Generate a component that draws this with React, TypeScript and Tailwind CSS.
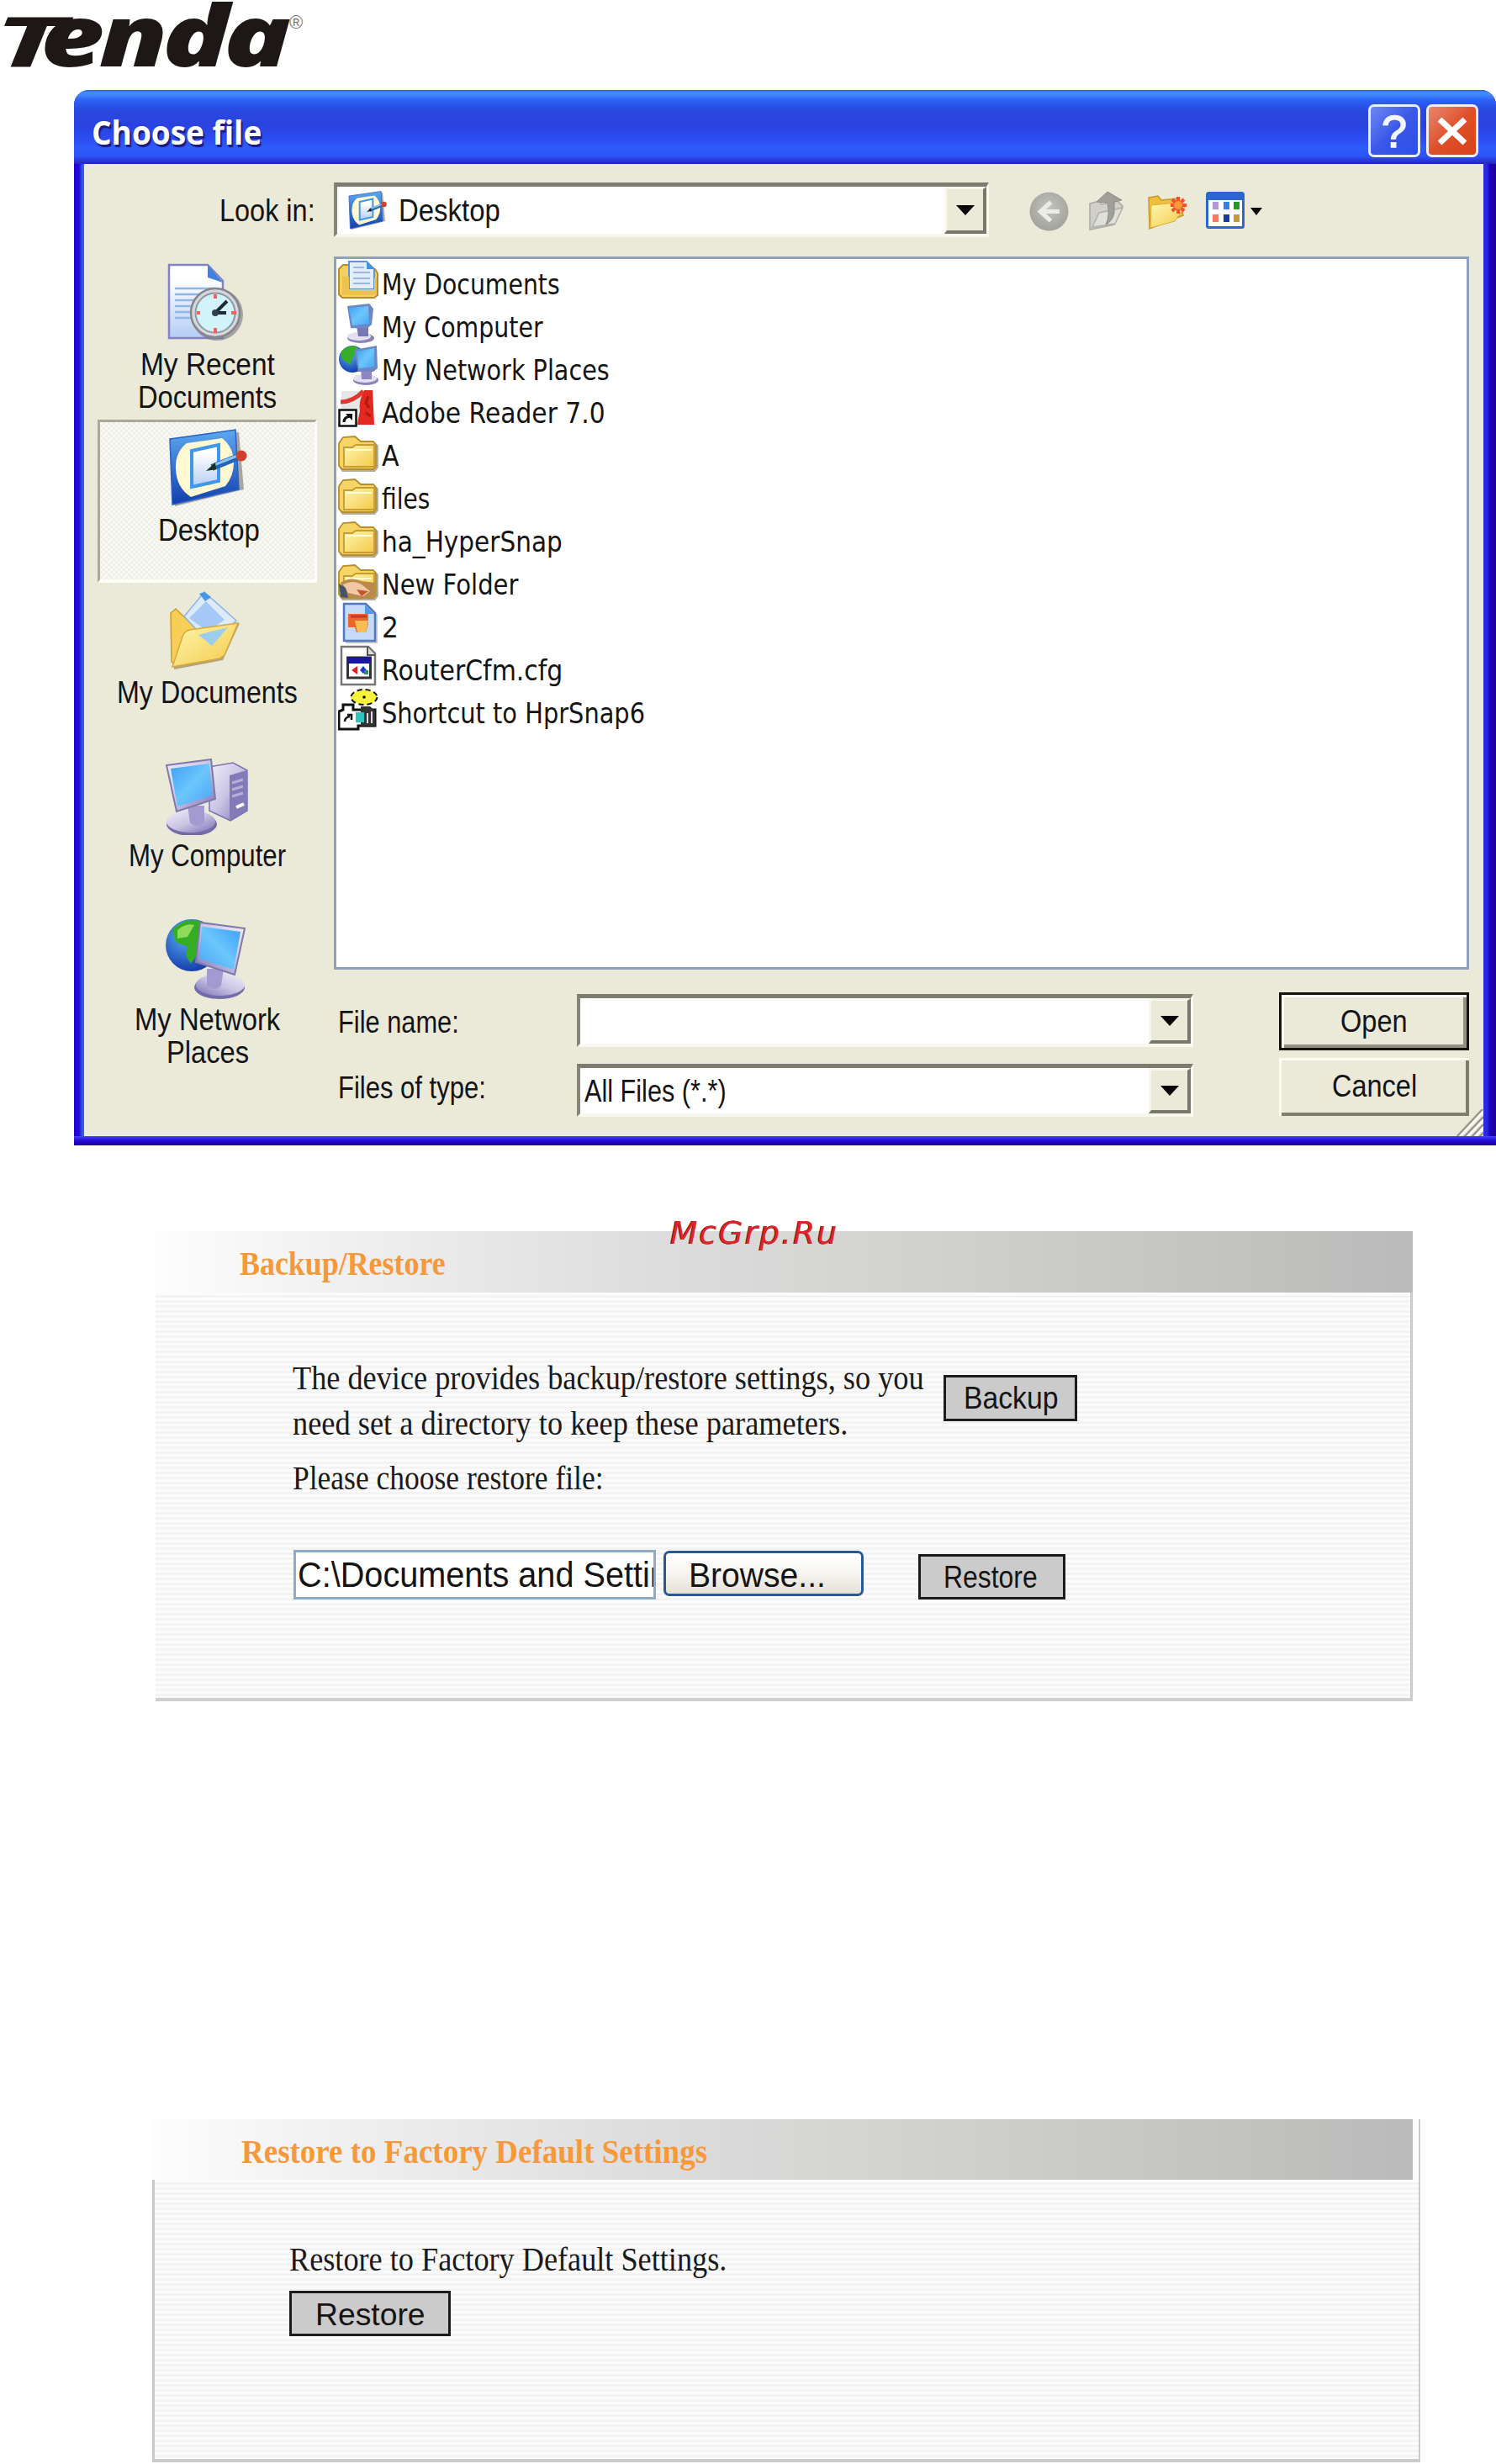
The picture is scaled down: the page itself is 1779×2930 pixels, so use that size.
import { useLayoutEffect, useRef, type ReactNode } from "react";

/* One line of text stretched to fill the width of its box. */
function Fit({ children, className = "" }: { children: ReactNode; className?: string }) {
  const ref = useRef<HTMLSpanElement>(null);
  useLayoutEffect(() => {
    const el = ref.current;
    if (!el || !el.parentElement) return;
    const fit = () => {
      el.style.transform = `scaleX(${el.parentElement!.clientWidth / el.offsetWidth})`;
    };
    fit();
    document.fonts?.ready.then(fit);
  }, []);
  return (
    <span className={`block shrink-0 whitespace-pre ${className}`}>
      <span ref={ref} className="inline-block origin-left align-top">
        {children}
      </span>
    </span>
  );
}

const MS = "font-['Liberation_Sans'] text-[37px] leading-[39px] text-[#141414]";
const TAHOMA = "font-['DejaVu_Sans'] text-[33px] leading-[51px] text-[#141414]";
const SERIF = "font-['Liberation_Serif'] text-[40px] leading-[54px] text-[#1a1a1a]";

function Defs() {
  return (
    <svg className="absolute h-0 w-0">
      <defs>
        <linearGradient id="screen" x1="0" y1="0" x2="1" y2="1">
          <stop offset="0" stopColor="#3ba0f8" />
          <stop offset=".5" stopColor="#6cc6fb" />
          <stop offset="1" stopColor="#4aa4f4" />
        </linearGradient>
        <linearGradient id="lilac" x1="0" y1="0" x2="1" y2="1">
          <stop offset="0" stopColor="#f1eef9" />
          <stop offset=".5" stopColor="#c9c3e4" />
          <stop offset="1" stopColor="#7870b4" />
        </linearGradient>
        <linearGradient id="yellow" x1="0" y1="0" x2="1" y2="1">
          <stop offset="0" stopColor="#fff6b0" />
          <stop offset="1" stopColor="#f3ca48" />
        </linearGradient>
        <linearGradient id="frame" x1="0" y1="0" x2="0" y2="1">
          <stop offset="0" stopColor="#5ea8ee" />
          <stop offset="1" stopColor="#123fae" />
        </linearGradient>
        <linearGradient id="paper" x1="0" y1="0" x2="0" y2="1">
          <stop offset=".2" stopColor="#ffffff" />
          <stop offset="1" stopColor="#b4cdf5" />
        </linearGradient>
        <radialGradient id="globe" cx=".4" cy=".3" r=".8">
          <stop offset="0" stopColor="#5cb0f4" />
          <stop offset="1" stopColor="#0b2fa4" />
        </radialGradient>
        <radialGradient id="grey" cx=".5" cy=".4" r=".6">
          <stop offset="0" stopColor="#c4c4be" />
          <stop offset="1" stopColor="#a2a29c" />
        </radialGradient>
      </defs>
    </svg>
  );
}

function RecentIcon() {
  return (
    <svg className="h-[94px] w-[92px]" viewBox="0 0 92 94">
      <path d="M2 3H48L66 22V90H2Z" fill="url(#paper)" stroke="#8583c8" strokeWidth="2.5" />
      <path d="M48 3 66 24 48 18Z" fill="#3f83dc" />
      <path d="M9 31H56M9 38H40M9 45H32M9 52H29M9 59H28M9 66H29" stroke="#8fb6ea" strokeWidth="2.5" />
      <circle cx="59" cy="62" r="31" fill="#7d7d88" opacity=".65" />
      <circle cx="57" cy="60" r="29" fill="#d8d8dc" stroke="#85858e" strokeWidth="2.5" />
      <circle cx="57" cy="60" r="23.500" fill="#d2f3fa" stroke="#8c9aa4" strokeWidth="2" />
      <path d="M57 38v5M57 78v6M35 60h4M76 60h6" stroke="#f2635c" strokeWidth="4" />
      <path d="M57 60 71 46M57 60H70" stroke="#1c2c38" strokeWidth="4" />
      <circle cx="57" cy="60" r="4" fill="#30404c" />
    </svg>
  );
}

function DesktopIcon({ className }: { className: string }) {
  return (
    <svg className={className} viewBox="0 0 94 92" preserveAspectRatio="none">
      <path d="M4 15 84 4 90 72 8 92Z" fill="#77706c" opacity=".6" />
      <path d="M2 12 80 1 84 72 5 90Z" fill="url(#frame)" stroke="#2563c4" strokeWidth="1.500" />
      <path d="M22 17 64 11Q78 22 78 40 78 56 68 68L27 81Q10 70 9 48 8 28 22 17Z" fill="#fff8d0" />
      <path d="M28 26 60 19V62L28 69Z" fill="url(#paper)" stroke="#3f97ea" strokeWidth="4" />
      <path d="M52 46 84 33" stroke="#2563b4" strokeWidth="8" />
      <path d="M54 43 82 32" stroke="#8cc6f8" strokeWidth="3" />
      <path d="M45 50 56 40 57 48Z" fill="#18301c" />
      <circle cx="87" cy="32" r="6.500" fill="#d0402c" />
    </svg>
  );
}

function DocumentsIcon() {
  return (
    <svg className="h-[93px] w-[88px]" viewBox="0 0 88 93">
      <path d="M7 28 40 50 84 38 64 82 6 93Z" fill="#8c7440" opacity=".6" />
      <path d="M2 26 8 21 34 46 8 88 3 84Z" fill="#f8cf56" stroke="#cf9a2c" strokeWidth="1.500" />
      <path d="M42 1 80 35 50 64 18 30Z" fill="#dceafb" stroke="#8cb4e8" strokeWidth="1.500" />
      <path d="M44 12 66 34 46 48 24 32Z" fill="#a5c8f6" />
      <path d="M36 3 42 1 50 7 43 12Z" fill="#4796ee" />
      <path d="M4 90 16 54Q18 48 24 46L82 38 66 76 60 80Z" fill="url(#yellow)" stroke="#d8a83c" strokeWidth="1.500" />
      <path d="M35 52 70 43 51 65Z" fill="#9cccee" />
    </svg>
  );
}

function Monitor({ x = 0, y = 0, flip = false }: { x?: number; y?: number; flip?: boolean }) {
  return (
    <g transform={flip ? `translate(${x + 60} ${y}) scale(-1 1)` : `translate(${x} ${y})`}>
      <ellipse cx="31" cy="78" rx="30" ry="14" fill="#746ca8" />
      <ellipse cx="30" cy="75" rx="29" ry="13" fill="url(#lilac)" />
      <path d="M26 56H46V76Q37 84 29 76Z" fill="#a39bcf" />
      <path d="M1 8 54 1 59 48 13 63Z" fill="url(#lilac)" stroke="#7e78ac" strokeWidth="2" />
      <path d="M6 12 52 6 55 44 14 57Z" fill="url(#screen)" />
    </g>
  );
}

function ComputerIcon() {
  return (
    <svg className="h-[91px] w-[98px]" viewBox="0 0 98 91">
      <path d="M52 10 80 5 97 14V62L77 74 52 62Z" fill="url(#lilac)" stroke="#7a73b0" strokeWidth="1.500" />
      <path d="M76 20 96 14V62L76 74Z" fill="#837bb8" />
      <path d="M79 29 92 25M79 37 92 33M79 45 92 41" stroke="#b5aeda" strokeWidth="3" />
      <path d="M84 58 93 54" stroke="#ffffff" strokeWidth="4" />
      <Monitor />
    </svg>
  );
}

function NetworkIcon() {
  return (
    <svg className="h-[97px] w-[98px]" viewBox="0 0 98 97">
      <circle cx="31" cy="32" r="31" fill="url(#globe)" />
      <path d="M8 14Q18 2 34 2 50 4 54 14L40 24 42 36 30 54 24 44 26 34 12 28Z" fill="#35ad22" />
      <path d="M14 14Q24 5 34 8L26 22 14 24Z" fill="#a5e66a" opacity=".8" />
      <Monitor x={35} y={4} flip />
    </svg>
  );
}

function FolderShape() {
  return (
    <g>
      <path d="M4 14 9 9H22L28 14H44L48 18V44L44 49H5L2 45Z" fill="#8d8263" opacity=".65" />
      <path d="M1 42V15L6 8 20 7 27 13H42L45 17V43L42 46H5Z" fill="#f5d565" stroke="#b98d2c" strokeWidth="1.800" />
      <path d="M7 43V20H17L21 17H43V43Z" fill="url(#yellow)" stroke="#c99b32" strokeWidth="1.800" />
      <path d="M10 23H40" stroke="#fffbd8" strokeWidth="2" />
    </g>
  );
}

function ShortcutBadge() {
  return (
    <g>
      <rect x="1.500" y="26.500" width="20" height="19" fill="#fff" stroke="#111" strokeWidth="2.500" />
      <path d="M7 41Q7 35 14 34" fill="none" stroke="#111" strokeWidth="3" />
      <path d="M9 31H17V39Z" fill="#111" />
    </g>
  );
}

function FileIcon({ kind }: { kind: string }) {
  return (
    <svg className="h-[51px] w-[48px] shrink-0" viewBox="0 0 48 51">
      {kind === "docs" && (
        <g>
          <path d="M1 42V12L6 7H16L20 12H44L47 17V43L43 46H5Z" fill="#f4d060" stroke="#b98d2c" strokeWidth="2" />
          <path d="M13 3H34L43 12V36H13Z" fill="#e2edfc" stroke="#5b93d8" strokeWidth="2" />
          <path d="M34 3V12H43Z" fill="#3e94e6" />
          <path d="M18 10H31M18 16H38M18 23H38M18 29H38" stroke="#9bb8e0" strokeWidth="2" />
          <path d="M5 21H13V37H43V22H46V43H5Z" fill="#eec24c" />
          <path d="M13 37H43" stroke="#b6c8e4" strokeWidth="2" />
        </g>
      )}
      {kind === "computer" && (
        <g>
          <ellipse cx="27" cy="43" rx="16" ry="6" fill="#8b84b8" />
          <ellipse cx="25" cy="41" rx="14" ry="5" fill="#e3e0f2" />
          <path d="M22 28H36V41H24Z" fill="#7a76b4" />
          <path d="M11 5 37 2 42 8 40 27 34 32 15 31Z" fill="#6e86c4" />
          <path d="M13 7 36 5 37 26 17 28Z" fill="url(#screen)" />
        </g>
      )}
      {kind === "network" && (
        <g>
          <circle cx="17" cy="17" r="16" fill="url(#globe)" />
          <path d="M4 8Q10 1 19 1L26 6 18 14 14 24 4 16Z" fill="#37ad2c" />
          <ellipse cx="33" cy="42" rx="15" ry="6" fill="#8b84b8" />
          <ellipse cx="32" cy="40" rx="14" ry="5" fill="#e3e0f2" />
          <path d="M27 28H40V41H28Z" fill="#8d87be" />
          <path d="M19 6 46 1 47 28 42 32 24 32Z" fill="#6e86c4" />
          <path d="M22 8 43 4 43 26 25 28Z" fill="url(#screen)" />
        </g>
      )}
      {kind === "adobe" && (
        <g>
          <path d="M4 4H42V44H4Z" fill="#e6e6e6" />
          <path d="M31 3H41L43 44H23Q24 36 26 28Q24 16 31 3Z" fill="#e3291f" />
          <path d="M3 17Q18 17 30 4" fill="none" stroke="#dc3830" strokeWidth="5" />
          <path d="M36 10 33 18 37 24M33 30 39 34" fill="none" stroke="#b01a12" strokeWidth="3" />
          <ShortcutBadge />
        </g>
      )}
      {kind === "folder" && <FolderShape />}
      {kind === "shared" && (
        <g>
          <FolderShape />
          <path d="M3 28Q14 20 28 26L44 28V44Q26 50 8 46Z" fill="#b98a4c" />
          <path d="M6 30Q18 24 28 30L38 38 30 44 12 40Z" fill="#f2c8a4" />
          <path d="M22 36 36 38 28 44Z" fill="#c65628" />
          <path d="M1 29 9 34 12 46 3 45Z" fill="#44546c" />
        </g>
      )}
      {kind === "image" && (
        <g>
          <path d="M9 4H35L47 15V49H9Z" fill="#777" opacity=".4" />
          <path d="M7 2H33L44 13V46H7Z" fill="#c4daf8" stroke="#5479c0" strokeWidth="2.500" />
          <path d="M32 3V14H43Z" fill="#4d9ce8" />
          <path d="M12 14H36V26L33 36H22L20 30H12Z" fill="#e8672c" />
          <path d="M20 22H36L33 36H23Z" fill="#f9bd54" />
          <path d="M15 17H34" stroke="#c63c18" strokeWidth="3" />
        </g>
      )}
      {kind === "cfg" && (
        <g>
          <path d="M4 2H36L44 10V47H4Z" fill="#fff" stroke="#777" strokeWidth="2.500" />
          <path d="M35 2V12H44" fill="#ddd" stroke="#555" strokeWidth="2" />
          <rect x="11.500" y="15" width="27" height="24" fill="#fff" stroke="#333" strokeWidth="3" />
          <rect x="11" y="14" width="28" height="8" fill="#1a1a98" />
          <path d="M16 30 23 25V35Z" fill="#d22" />
          <path d="M30 25 34 30 30 34 26 30Z" fill="#2430d8" />
          <rect x="31" y="30" width="5" height="5" fill="#1a9c58" />
        </g>
      )}
      {kind === "snap" && (
        <g>
          <path d="M6 26V20H18V26H44V45H24V49H1V28Z" fill="#fff" stroke="#111" strokeWidth="3" />
          <path d="M27 22H38L44 27V45H27Z" fill="#333" />
          <rect x="21" y="29" width="10" height="12" fill="#2cc4bc" />
          <path d="M35 30V42M40 28V42" stroke="#ddd" strokeWidth="2" />
          <path d="M8 40Q8 35 14 34M11 32H16V38" fill="none" stroke="#111" strokeWidth="2.500" />
          <ellipse cx="31" cy="11" rx="15.500" ry="9" fill="#f7f23a" stroke="#111" strokeWidth="2" strokeDasharray="6 4" />
          <circle cx="31" cy="11" r="1.800" fill="#111" />
        </g>
      )}
    </svg>
  );
}

function Triangle({ className }: { className: string }) {
  return (
    <svg className={className} viewBox="0 0 22 12" preserveAspectRatio="none">
      <path d="M0 0H22L11 12Z" fill="#050505" />
    </svg>
  );
}

function Combo({ className, children }: { className: string; children?: ReactNode }) {
  return (
    <div
      className={`flex shrink-0 items-stretch border-l-4 border-t-[5px] border-r-[3px] border-b-[4px] border-l-[#85857a] border-t-[#7d7d6f] border-r-[#fbfaf2] border-b-[#f8f7ee] bg-white ${className}`}
    >
      <div className="flex min-w-0 flex-1 items-start">{children}</div>
      <div className="flex w-[50px] shrink-0 items-center justify-center border-t-[3px] border-r-4 border-b-4 border-l-[3px] border-t-[#f8f7ef] border-l-[#f8f7ef] border-r-[#77776a] border-b-[#77776a] bg-[#ebe9d8]">
        <Triangle className="h-[12px] w-[22px]" />
      </div>
    </div>
  );
}

const files: { kind: string; name: string; w: string }[] = [
  { kind: "docs", name: "My Documents", w: "w-[212px]" },
  { kind: "computer", name: "My Computer", w: "w-[192px]" },
  { kind: "network", name: "My Network Places", w: "w-[271px]" },
  { kind: "adobe", name: "Adobe Reader 7.0", w: "w-[266px]" },
  { kind: "folder", name: "A", w: "w-[21px]" },
  { kind: "folder", name: "files", w: "w-[57px]" },
  { kind: "folder", name: "ha_HyperSnap", w: "w-[215px]" },
  { kind: "shared", name: "New Folder", w: "w-[162px]" },
  { kind: "image", name: "2", w: "w-[20px]" },
  { kind: "cfg", name: "RouterCfm.cfg", w: "w-[215px]" },
  { kind: "snap", name: "Shortcut to HprSnap6", w: "w-[313px]" },
];

function Dialog() {
  return (
    <div className="ml-[88px] flex h-[1255px] w-[1691px] shrink-0 flex-col overflow-hidden rounded-tl-[18px] rounded-tr-[18px] bg-[linear-gradient(to_right,#2100cf,#2408dc_6px,#2f5fe0_10px,#2f5fe0_20px,#2c2ae8_1676px,#2a2ae0_1680px,#2000b8_1684px,#1c009c)]">
      <header className="flex h-[88px] shrink-0 items-start bg-[linear-gradient(to_bottom,#2a5ee8,#438cfb_3px,#3f86fa_6px,#2c62f8_12px,#2a48e0_24px,#2a42df_42px,#2c4cf2_58px,#2e5bfc_68px,#2d55f8_78px,#2a38d8_84px,#2424b8)] pl-[21px]">
        <Fit className="mt-[30px] w-[202px] font-['Open_Sans'] text-[39px] leading-[39px] font-bold text-white [text-shadow:2px_3px_1px_#1a1a80]">
          Choose file
        </Fit>
        <div className="mt-[17px] mr-[21px] ml-auto flex gap-[7px]">
          <div className="flex h-[63px] w-[62px] items-center justify-center rounded-[7px] border-[3px] border-[#e8ecff] bg-linear-to-br from-[#6f86f2] via-[#3a58e8] to-[#2c50e8] font-['Liberation_Sans'] text-[54px] leading-none text-[#f4f5ff] [-webkit-text-stroke:1.5px_#f4f5ff]">
            ?
          </div>
          <div className="flex h-[63px] w-[62px] items-center justify-center rounded-[7px] border-[3px] border-[#f3ecf4] bg-linear-to-br from-[#e8866c] via-[#de4f28] to-[#d8421a]">
            <svg className="h-[34px] w-[36px]" viewBox="0 0 36 34">
              <path d="M3 3 33 31M33 3 3 31" stroke="#fff" strokeWidth="7" />
            </svg>
          </div>
        </div>
      </header>

      <div className="mr-[15px] ml-[12px] flex h-[1156px] flex-col overflow-hidden bg-[#ebe9d8]">
        <div className="flex h-[110px] shrink-0 items-start">
          <Fit className={`mt-[36px] ml-[161px] w-[114px] ${MS}`}>Look in:</Fit>
          <Combo className="mt-[22px] ml-[22px] h-[65px] w-[779px]">
            <DesktopIcon className="mt-[5px] ml-[13px] h-[46px] w-[46px]" />
            <Fit className={`mt-[9px] ml-[14px] w-[121px] ${MS}`}>Desktop</Fit>
          </Combo>
          <svg className="mt-[33px] ml-[48px] h-[47px] w-[47px]" viewBox="0 0 46 46" preserveAspectRatio="none">
            <circle cx="23" cy="23" r="22.500" fill="url(#grey)" />
            <path d="M25 12 13 23 25 34M14 23H35" fill="none" stroke="#edede8" strokeWidth="5" />
          </svg>
          <svg className="mt-[32px] ml-[24px] h-[47px] w-[41px]" viewBox="0 0 41 47">
            <path d="M1 15 12 12 15 16 34 12 40 18 30 40 1 46Z" fill="#d0d0c8" stroke="#aaaaa2" strokeWidth="1.500" />
            <path d="M4 43 12 26 40 20 31 39Z" fill="#e0e0da" stroke="#b0b0a8" strokeWidth="1.500" />
            <path d="M9 13 22 1 39 11 30 13V26Q28 36 20 40 25 30 22 14Z" fill="#a0a098" stroke="#8d8d86" strokeWidth="1" />
          </svg>
          <svg className="mt-[37px] ml-[29px] h-[41px] w-[48px]" viewBox="0 0 48 41">
            <path d="M1 3 12 1 16 6 36 4 42 24 2 40Z" fill="#efbf3c" stroke="#c99528" strokeWidth="1.500" />
            <path d="M4 12 34 9 45 13 32 31 3 39Z" fill="url(#yellow)" stroke="#dcae3e" strokeWidth="1" />
            <path d="M36 2V22M27 12H46M29 5 43 19M43 5 29 19" stroke="#f4502e" strokeWidth="4" />
            <circle cx="36" cy="12" r="5" fill="#ff9a3a" />
          </svg>
          <svg className="mt-[33px] ml-[21px] h-[44px] w-[46px]" viewBox="0 0 46 44">
            <rect x="1.500" y="1.500" width="43" height="41" rx="2" fill="#fff" stroke="#2b68d0" strokeWidth="3" />
            <rect x="1" y="1" width="44" height="9" rx="2" fill="#2a66cc" />
            <rect x="8" y="12" width="7" height="9" fill="#b49ad0" />
            <rect x="21" y="12" width="7" height="9" fill="#3a80e0" />
            <rect x="33" y="12" width="7" height="9" fill="#1f9c28" />
            <rect x="8" y="27" width="7" height="9" fill="#f47a64" />
            <rect x="21" y="27" width="7" height="9" fill="#1c3c9c" />
            <rect x="33" y="27" width="7" height="9" fill="#c89a30" />
          </svg>
          <Triangle className="mt-[52px] ml-[7px] h-[9px] w-[14px]" />
        </div>

        <div className="flex min-h-0 flex-1">
          <nav className="flex w-[297px] shrink-0 flex-col items-center pt-[7px] pr-[4px]">
            <div className="mr-[4px] h-[94px] shrink-0">
              <RecentIcon />
            </div>
            <Fit className={`mt-[8px] w-[160px] ${MS}`}>My Recent</Fit>
            <Fit className={`w-[165px] ${MS}`}>Documents</Fit>
            <div className="mt-[7px] flex h-[194px] w-[261px] shrink-0 flex-col items-center border-t-[3px] border-l-[3px] border-r-[3px] border-b-[4px] border-t-[#aba899] border-l-[#aba899] border-r-[#fcfcf8] border-b-[#fcfcf8] bg-[#f4f3ec] bg-[repeating-conic-gradient(#f0efe6_0_25%,#f8f8f4_0_50%)] bg-[length:6px_6px] pt-[8px]">
              <DesktopIcon className="h-[92px] w-[94px]" />
              <Fit className={`mt-[9px] ml-[4px] w-[121px] ${MS}`}>Desktop</Fit>
            </div>
            <div className="mt-[10px] mr-[4px] h-[93px] shrink-0">
              <DocumentsIcon />
            </div>
            <Fit className={`mt-[8px] w-[215px] ${MS}`}>My Documents</Fit>
            <div className="mt-[59px] mr-[2px] h-[91px] shrink-0">
              <ComputerIcon />
            </div>
            <Fit className={`mt-[5px] w-[187px] ${MS}`}>My Computer</Fit>
            <div className="mt-[55px] mr-[2px] h-[97px] shrink-0">
              <NetworkIcon />
            </div>
            <Fit className={`mt-[4px] w-[173px] ${MS}`}>My Network</Fit>
            <Fit className={`w-[98px] ${MS}`}>Places</Fit>
          </nav>

          <main className="flex w-[1367px] shrink-0 flex-col">
            <ul className="h-[848px] w-[1350px] shrink-0 border-[3px] border-[#8fa2bd] bg-white pl-[2px]">
              {files.map((f) => (
                <li key={f.name} className="flex h-[51px] items-start">
                  <FileIcon kind={f.kind} />
                  <Fit className={`mt-[5px] ml-[4px] ${f.w} ${TAHOMA}`}>{f.name}</Fit>
                </li>
              ))}
            </ul>
            <div className="mt-[27px] flex items-start">
              <div className="flex w-[289px] shrink-0 flex-col items-start pl-[5px]">
                <Fit className={`mt-[16px] w-[144px] ${MS}`}>File name:</Fit>
                <Fit className={`mt-[39px] w-[176px] ${MS}`}>Files of type:</Fit>
              </div>
              <div className="flex shrink-0 flex-col">
                <Combo className="mt-[2px] h-[63px] w-[733px]" />
                <Combo className="mt-[20px] h-[63px] w-[733px]">
                  <Fit className={`mt-[8px] ml-[5px] w-[169px] ${MS}`}>All Files (*.*)</Fit>
                </Combo>
              </div>
              <div className="ml-[102px] flex shrink-0 flex-col gap-[9px]">
                <button className="h-[69px] w-[226px] border-[3px] border-[#14140f] bg-[#ebe9d8] shadow-[inset_3px_3px_0_#fffef6,inset_-4px_-4px_0_#93917f]">
                  <Fit className={`mx-auto -mt-[1px] w-[80px] ${MS}`}>Open</Fit>
                </button>
                <button className="h-[69px] w-[226px] bg-[#ebe9d8] shadow-[inset_3px_3px_0_#fffef6,inset_-4px_-4px_0_#7f7d6c]">
                  <Fit className={`mx-auto -mt-[3px] w-[101px] ${MS}`}>Cancel</Fit>
                </button>
              </div>
              <svg className="-ml-[15px] mt-[139px] h-[33px] w-[32px] shrink-0" viewBox="0 0 32 33">
                <path d="M3 33 32 2M12 33 32 12M21 33 32 22" stroke="#fff" strokeWidth="3" />
                <path d="M0 33 31 0M9 33 32 9M18 33 32 18M27 33 32 28" stroke="#9a9884" strokeWidth="2.500" />
              </svg>
            </div>
          </main>
        </div>
      </div>
      <div className="h-[11px] shrink-0 bg-[linear-gradient(to_bottom,#4a4af0,#2a20e8_3px,#2408cc_6px,#1c0098)]" />
    </div>
  );
}

const STRIPES =
  "bg-[repeating-linear-gradient(to_bottom,#fbfbfb_0,#fbfbfb_3px,#f1f1f1_4px,#f1f1f1_5px,#f8f8f8_6px)]";
const HEADER = "bg-[linear-gradient(to_right,#fdfdfd,#f0f0f0_15%,#dedede_38%,#cfcfcd_65%,#c3c3c1_85%,#bababa)]";
const GREY_BUTTON = "flex shrink-0 items-start justify-center border-[3px] border-[#1c1c1c] bg-[#cbcbcb]";

export default function App() {
  return (
    <div className="relative flex h-[2930px] w-[1779px] flex-col overflow-hidden bg-white">
      <Defs />
      <div className="flex h-[107px] shrink-0 items-start text-[#1d1715]">
        <Fit className="mt-[6px] ml-[-8px] w-[84px] font-['Open_Sans'] text-[83px] leading-[83px] font-bold italic">T</Fit>
        <Fit className="ml-[-28px] w-[292px] font-['Open_Sans'] text-[101px] leading-[80px] font-extrabold tracking-[-5px] italic">
          enda
        </Fit>
        <span className="mt-[16px] ml-[4px] font-['Liberation_Sans'] text-[22px] leading-[22px] text-[#777]">®</span>
      </div>

      <Dialog />

      <section className="mt-[102px] ml-[185px] flex h-[559px] w-[1495px] shrink-0 flex-col border-b-4 border-[#cfcfcf]">
        <div className={`flex h-[73px] shrink-0 items-start pl-[100px] ${HEADER}`}>
          <Fit className={`mt-[12px] w-[245px] font-bold ${SERIF} text-[#f7993a]!`}>Backup/Restore</Fit>
        </div>
        <div className={`flex-1 border-r-[3px] border-[#cacaca] pt-[75px] pl-[163px] ${STRIPES}`}>
          <div className="flex items-start">
            <div className="w-[774px]">
              <Fit className={`w-[751px] ${SERIF}`}>The device provides backup/restore settings, so you</Fit>
              <Fit className={`w-[660px] ${SERIF}`}>need set a directory to keep these parameters.</Fit>
            </div>
            <div className={`mt-[23px] h-[55px] w-[159px] pt-[5px] ${GREY_BUTTON}`}>
              <Fit className={`w-[112px] ${MS}`}>Backup</Fit>
            </div>
          </div>
          <Fit className={`mt-[11px] w-[370px] ${SERIF}`}>Please choose restore file:</Fit>
          <div className="mt-[58px] ml-[1px] flex items-start">
            <div className="h-[59px] w-[431px] overflow-hidden border-[3px] border-[#8fabc8] bg-white">
              <Fit className="mt-[6px] ml-[2px] w-[441px] font-['Liberation_Sans'] text-[42px] leading-[42px] text-[#141414]">
                {"C:\\Documents and Settin"}
              </Fit>
            </div>
            <div className="mt-[1px] ml-[9px] flex h-[54px] w-[238px] items-start rounded-[7px] border-[3px] border-[#2c5796] bg-linear-to-b from-white via-[#f6f5f0] to-[#e4e0d4]">
              <Fit className="mt-[6px] ml-[27px] w-[163px] font-['Liberation_Sans'] text-[41px] leading-[41px] text-[#141414]">
                Browse...
              </Fit>
            </div>
            <div className={`mt-[5px] ml-[65px] h-[54px] w-[175px] pt-[5px] pr-[4px] ${GREY_BUTTON}`}>
              <Fit className={`w-[112px] ${MS}`}>Restore</Fit>
            </div>
          </div>
        </div>
      </section>

      <section className="mt-[497px] ml-[181px] flex h-[408px] w-[1508px] shrink-0 flex-col border-r-2 border-b-4 border-[#cccccc]">
        <div className={`flex h-[72px] w-[1499px] shrink-0 items-start pl-[106px] ${HEADER}`}>
          <Fit className={`mt-[12px] w-[554px] font-bold ${SERIF} text-[#f7993a]!`}>Restore to Factory Default Settings</Fit>
        </div>
        <div className={`flex-1 border-l-[3px] border-[#cacaca] pt-[68px] pl-[160px] ${STRIPES}`}>
          <Fit className={`w-[520px] ${SERIF}`}>Restore to Factory Default Settings.</Fit>
          <div className={`mt-[10px] h-[54px] w-[192px] pt-[6px] ${GREY_BUTTON}`}>
            <Fit className={`w-[131px] ${MS}`}>Restore</Fit>
          </div>
        </div>
      </section>

      <div className="absolute top-[1447px] left-[797px]">
        <Fit className="w-[200px] font-['DejaVu_Sans'] text-[38px] leading-[38px] tracking-[2px] text-[#e02428] italic [text-shadow:-1px_0_0_#6a1010]">
          McGrp.Ru
        </Fit>
      </div>
    </div>
  );
}
